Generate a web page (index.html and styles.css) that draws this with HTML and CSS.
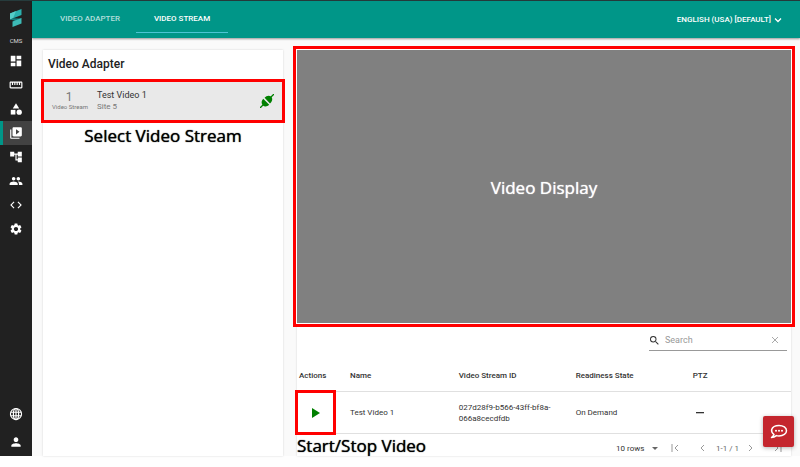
FILE: index.html
```html
<!DOCTYPE html>
<html lang="en">

<head>
    <meta charset="UTF-8">
    <meta name="viewport" content="width=device-width, initial-scale=1.0">
    <title>Video Stream</title>
    <link rel="stylesheet" href="styles.css">
</head>

<body>
    <div class="app">
        <nav class="sidebar" aria-label="Main">
            <a class="logo" href="#" aria-label="Home">
                <svg viewBox="0 0 12 20" width="12" height="20">
                    <path fill="#2bb0ae" d="M0 5.500 11.500 1v6L0 11.500z" />
                    <path fill="#55cdc8" d="M0 5.500 6 3.100 3 10.300 0 11.500z" />
                    <path fill="#14807f" d="M0 11.500 3 10.300l8.500.2L6 13z" />
                    <path fill="#3dbab6" d="M2.500 13.500 11.500 10v5.500L2.500 19z" />
                </svg>
            </a>
            <span class="brand">CMS</span>
            <a class="item" href="#" aria-label="Dashboard"><svg viewBox="0 0 24 24"><path d="M3 13h8V3H3v10zm0 8h8v-6H3v6zm10 0h8V11h-8v10zm0-18v6h8V3h-8z" /></svg></a>
            <a class="item" href="#" aria-label="Measure"><svg viewBox="0 0 24 24"><path d="M21 6H3c-1.100 0-2 .9-2 2v8c0 1.100.9 2 2 2h18c1.100 0 2-.9 2-2V8c0-1.100-.9-2-2-2zm0 10H3V8h2v4h2V8h2v4h2V8h2v4h2V8h2v4h2V8h2v8z" /></svg></a>
            <a class="item" href="#" aria-label="Assets"><svg viewBox="0 0 24 24"><path d="M12 2 6.500 11h11z" /><circle cx="17.500" cy="17.500" r="4.500" /><path d="M3 13.500h8v8H3z" /></svg></a>
            <a class="item active" href="#" aria-label="Video"><svg viewBox="0 0 24 24"><path d="M4 6H2v14c0 1.100.9 2 2 2h14v-2H4V6zm16-4H8c-1.100 0-2 .9-2 2v12c0 1.100.9 2 2 2h12c1.100 0 2-.9 2-2V4c0-1.100-.9-2-2-2zm-8 12.500v-9l6 4.500-6 4.500z" /></svg></a>
            <a class="item" href="#" aria-label="Hierarchy"><svg viewBox="0 0 24 24"><path d="M22 11V3h-7v3H9V3H2v8h7V8h2v10h4v3h7v-8h-7v3h-2V8h2v3z" /></svg></a>
            <a class="item" href="#" aria-label="Users"><svg viewBox="0 0 24 24"><path d="M16 11c1.660 0 3-1.340 3-3s-1.340-3-3-3-3 1.340-3 3 1.340 3 3 3zm-8 0c1.660 0 3-1.340 3-3S9.660 5 8 5 5 6.340 5 8s1.340 3 3 3zm0 2c-2.330 0-7 1.170-7 3.500V19h14v-2.500c0-2.330-4.670-3.500-7-3.500zm8 0c-.3 0-.6 0-1 .05 1.200.85 2 2 2 3.450V19h6v-2.500c0-2.330-4.670-3.500-7-3.500z" /></svg></a>
            <a class="item" href="#" aria-label="Developer"><svg viewBox="0 0 24 24"><path d="M9.400 16.600 4.800 12l4.600-4.600L8 6l-6 6 6 6 1.400-1.400zm5.200 0 4.600-4.600-4.600-4.600L16 6l6 6-6 6-1.400-1.400z" /></svg></a>
            <a class="item" href="#" aria-label="Settings"><svg viewBox="0 0 24 24"><path d="M19.140 12.940c.04-.3.060-.61.060-.94 0-.32-.02-.64-.07-.94l2.030-1.580c.18-.14.230-.41.120-.61l-1.920-3.320c-.12-.22-.37-.29-.59-.22l-2.390.96c-.5-.38-1.030-.7-1.620-.94l-.36-2.540c-.04-.24-.24-.41-.48-.41h-3.840c-.24 0-.43.170-.47.410l-.36 2.540c-.59.240-1.130.570-1.620.940l-2.390-.96c-.22-.08-.47 0-.59.220L2.740 8.870c-.12.210-.08.470.120.610l2.030 1.580c-.05.300-.09.630-.09.940s.02.640.070.940l-2.030 1.580c-.18.140-.23.410-.12.610l1.920 3.320c.12.220.370.290.590.220l2.390-.96c.5.380 1.030.700 1.620.940l.36 2.540c.05.240.240.410.480.410h3.840c.24 0 .44-.17.470-.41l.36-2.540c.59-.24 1.130-.56 1.620-.94l2.390.96c.22.080.470 0 .590-.22l1.920-3.320c.12-.22.070-.47-.12-.61l-2.010-1.580zM12 15.600c-1.980 0-3.600-1.620-3.600-3.600s1.620-3.600 3.600-3.600 3.600 1.620 3.600 3.600-1.620 3.600-3.600 3.600z" /></svg></a>
            <div class="bottom">
                <a class="item" href="#" aria-label="Language"><svg class="line" viewBox="0 0 24 24"><circle cx="12" cy="12" r="9.500" /><ellipse cx="12" cy="12" rx="4.500" ry="9.500" /><path d="M3 9h18M3 15h18M12 2v20" /></svg></a>
                <a class="item" href="#" aria-label="Account"><svg viewBox="0 0 24 24"><path d="M12 12c2.210 0 4-1.790 4-4s-1.790-4-4-4-4 1.790-4 4 1.790 4 4 4zm0 2c-2.670 0-8 1.340-8 4v2h16v-2c0-2.660-5.330-4-8-4z" /></svg></a>
            </div>
        </nav>

        <div class="page">
            <header class="topbar">
                <a class="tab" href="#">VIDEO ADAPTER</a>
                <a class="tab selected" href="#">VIDEO STREAM</a>
                <button class="language" type="button">ENGLISH (USA) [DEFAULT]
                    <svg viewBox="0 0 8 8" width="8" height="8"><path d="M1 2.500 4 5.500 7 2.500" fill="none" stroke="currentColor" stroke-width="1.300" /></svg>
                </button>
            </header>

            <main class="content">
                <section class="adapters">
                    <h1 class="title">Video Adapter</h1>
                    <a class="adapter marked" href="#">
                        <span class="count"><b>1</b>Video Stream</span>
                        <span class="info"><b>Test Video 1</b>Site 5</span>
                        <svg class="plug" viewBox="0 0 14 14" width="14" height="14">
                            <path d="M0 14 4 10M10 4l4-4" stroke="green" stroke-width="1.300" />
                            <path fill="green" d="M3.200 4.800 9.200 10.800C7 12.800 4.500 13 2.800 11.200S1.200 7 3.200 4.800zM4.600 3.800C6.400 1.600 9.300 1 11.200 2.800s1 5-1.200 6.600z" />
                        </svg>
                    </a>
                    <p class="note select-note">Select Video Stream</p>
                </section>

                <section class="stream">
                    <div class="display marked">
                        <p class="note">Video Display</p>
                    </div>
                    <div class="search">
                        <label for="search" aria-label="Search">
                            <svg viewBox="3 3 18 18" width="9" height="9"><path d="M15.500 14h-.79l-.28-.27A6.470 6.470 0 0 0 16 9.500 6.500 6.500 0 1 0 9.500 16c1.610 0 3.090-.59 4.230-1.570l.27.280v.79l5 4.990L20.490 19l-4.990-5zm-6 0C7.010 14 5 11.990 5 9.500S7.010 5 9.500 5 14 7.010 14 9.500 11.990 14 9.500 14z" fill="#333" /></svg>
                        </label>
                        <input id="search" type="text" placeholder="Search">
                        <button type="button" aria-label="Clear"><svg viewBox="0 0 8 8" width="8" height="8"><path d="m1 1 6 6M7 1 1 7" stroke="#aaa" /></svg></button>
                    </div>
                    <table class="streams">
                        <thead>
                            <tr>
                                <th class="actions">Actions</th>
                                <th class="name">Name</th>
                                <th class="stream-id">Video Stream ID</th>
                                <th class="state">Readiness State</th>
                                <th class="ptz">PTZ</th>
                            </tr>
                        </thead>
                        <tbody>
                            <tr>
                                <td class="play-cell marked"><button type="button" aria-label="Play"><svg viewBox="0 0 8 10" width="8" height="10"><path d="M0 0v10l8-5z" fill="green" /></svg></button></td>
                                <td>Test Video 1</td>
                                <td>027d28f9-b566-43ff-bf8a-066a8cecdfdb</td>
                                <td>On Demand</td>
                                <td><svg class="dash" viewBox="0 0 8 2" width="8" height="2"><path d="M0 0h8v1.300H0z" fill="#333" /></svg></td>
                            </tr>
                        </tbody>
                    </table>
                    <footer class="pager">
                        <p class="note">Start/Stop Video</p>
                        <label class="rows">
                            <select aria-label="Rows per page">
                                <option>10 rows</option>
                            </select>
                            <svg viewBox="0 0 8 8"><path d="M1 3h6L4 6z" fill="#666" stroke="none" /></svg>
                        </label>
                        <button type="button" aria-label="First page"><svg viewBox="0 0 8 8"><path d="M1 0v8M7 1 4 4l3 3" /></svg></button>
                        <button type="button" aria-label="Previous page"><svg viewBox="0 0 8 8"><path d="M6 1 3 4l3 3" /></svg></button>
                        <span class="range">1-1 / 1</span>
                        <button type="button" aria-label="Next page"><svg viewBox="0 0 8 8"><path d="m2 1 3 3-3 3" /></svg></button>
                        <button type="button" aria-label="Last page"><svg viewBox="0 0 8 8"><path d="m1 1 3 3-3 3M7 0v8" /></svg></button>
                    </footer>
                </section>
            </main>
        </div>

        <button class="chat" type="button" aria-label="Chat">
            <svg viewBox="0 0 18 16" width="18" height="16">
                <path d="M4 10.500C2 9 1.200 7.500 1.700 5.500 2.500 3 5.500 1.500 9 1.500c4.300 0 7.500 2.200 7.500 5.200S13.300 12 9 12c-1 0-1.800-.1-2.600-.4C5 12.800 3.500 13.500 1.500 13.500 2.800 12.500 3.700 11.500 4 10.500z" fill="none" stroke="#fff" stroke-width="1.500" stroke-linejoin="round" />
                <circle cx="6" cy="6.700" r="1" fill="#fff" /><circle cx="9" cy="6.700" r="1" fill="#fff" /><circle cx="12" cy="6.700" r="1" fill="#fff" />
            </svg>
        </button>
    </div>
</body>

</html>
```
FILE: styles.css
```css
* {
    box-sizing: border-box;
}

body {
    margin: 0;
    padding-bottom: 11px;
    height: 100vh;
    background-color: #fefefe;
    font-family: Roboto, sans-serif;
    font-size: 8px;
    color: #333;
}

a {
    color: inherit;
    text-decoration: none;
}

button {
    display: flex;
    align-items: center;
    justify-content: center;
    padding: 0;
    border: none;
    background: none;
    font: inherit;
    color: inherit;
}

h1,
p {
    margin: 0;
}

.app {
    position: relative;
    display: flex;
    height: 100%;
    border-top: 1px solid #263b3c;
    background-color: #fafafa;
}

/* sidebar */
.sidebar {
    display: flex;
    flex-direction: column;
    width: 32px;
    background-color: #212121;
    color: #fff;
}

.logo {
    display: flex;
    justify-content: center;
    padding-top: 7px;
}

.brand {
    padding: 8px 0;
    line-height: 10px;
    font-size: 6px;
    text-align: center;
    color: #ddd;
    height: 21px;
}

.item {
    display: flex;
    align-items: center;
    justify-content: center;
    height: 24px;
}

.item svg {
    width: 14px;
    height: 14px;
    fill: #fff;
}

.item .line {
    fill: none;
    stroke: #fff;
    stroke-width: 2;
}

.active {
    background-color: #424242;
    border-left: 3px solid #009688;
    padding-right: 3px;
}

.bottom {
    display: flex;
    flex-direction: column;
    gap: 4px;
    margin-top: auto;
    padding-bottom: 2px;
}

/* top bar */
.page {
    flex: 1;
    display: flex;
    flex-direction: column;
    min-width: 0;
}

.topbar {
    display: flex;
    align-items: center;
    height: 37px;
    padding: 0 18px 0 12px;
    background-color: #009688;
    box-shadow: 0 1px 2px rgba(0, 0, 0, 0.4);
    font-weight: 500;
    color: #fff;
}

.tab {
    width: 92px;
    line-height: 26px;
    border-bottom: 1px solid transparent;
    text-align: center;
    color: #b2dfdb;
}

.selected {
    border-color: #4dc4d4;
    color: #fff;
}

.language {
    gap: 3px;
    margin-left: auto;
}

/* content */
.content {
    flex: 1;
    display: grid;
    grid-template-columns: 240fr 494fr;
    gap: 14px;
    padding: 12px 9px 0 11px;
    min-height: 0;
}

.adapters,
.stream {
    background-color: #fff;
    box-shadow: 0 0 2px rgba(0, 0, 0, 0.15);
    min-width: 0;
}

.title {
    padding: 0 5px;
    line-height: 28px;
    font-size: 12px;
    font-weight: 500;
    color: #222;
}

/* red frame round a highlighted part */
.marked {
    position: relative;
}

.marked::after {
    content: "";
    position: absolute;
    inset: -2px;
    border: 3px solid #f00;
    pointer-events: none;
}

.adapter {
    display: flex;
    align-items: center;
    height: 40px;
    margin-top: 3px;
    padding: 0 9px;
    background-color: #e9e9e9;
}

.count,
.info {
    display: flex;
    flex-direction: column;
    color: #777;
}

.count {
    width: 34px;
    font-size: 6px;
    line-height: 8px;
    text-align: center;
    white-space: nowrap;
}

.count b {
    font-size: 12px;
    font-weight: 400;
    line-height: 12px;
}

.info {
    flex: 1;
    margin-left: 11px;
    line-height: 12px;
}

.info b {
    font-size: 9px;
    font-weight: 400;
    color: #333;
}

.note {
    font-family: "Open Sans", sans-serif;
    font-size: 17px;
    line-height: 24px;
    color: #000;
    text-shadow: 0 0 1px currentColor;
    white-space: nowrap;
}

.select-note {
    padding-top: 3px;
    text-align: center;
}

.stream {
    display: flex;
    flex-direction: column;
}

.display {
    flex: 1;
    display: flex;
    align-items: center;
    justify-content: center;
    padding-top: 4px;
    background-color: #808080;
    box-shadow: 0 0 0 2px #fff;
}

.display::after {
    inset: -4px;
}

.display .note {
    color: #fff;
}

.search {
    display: flex;
    align-items: center;
    gap: 6px;
    width: 138px;
    height: 20px;
    margin: 8px 4px 0 auto;
    padding: 0 8px 0 1px;
    border-bottom: 1px solid #999;
}

.search label {
    display: flex;
}

.search input {
    flex: 1;
    min-width: 0;
    padding: 0;
    border: none;
    outline: none;
    background: none;
    font: 9px Roboto, sans-serif;
}

.search input::placeholder {
    color: #999;
}

/* table */
.streams {
    width: 100%;
    table-layout: fixed;
    border-collapse: collapse;
    line-height: 11px;
    text-align: left;
}

.streams th {
    height: 41px;
    padding: 10px 2px 0;
    font-weight: 500;
}

.streams td {
    height: 42px;
    padding: 0 2px;
    border-top: 1px solid #e0e0e0;
    border-bottom: 1px solid #e0e0e0;
}

.actions {
    width: 51px;
}

.name {
    width: 22%;
}

.stream-id,
.state {
    width: 117px;
}

.play-cell button {
    width: 33px;
}

.play-cell::after {
    right: 12px;
}

.dash {
    display: block;
    margin-left: 3px;
}

.pager {
    display: flex;
    align-items: center;
    height: 22px;
    padding-right: 9px;
    color: #666;
}

.pager .note {
    padding-top: 2px;
}

.pager svg {
    display: block;
    width: 8px;
    height: 8px;
    fill: none;
    stroke: #999;
}

.rows {
    display: flex;
    align-items: center;
    gap: 6px;
    margin: 6px 12px 0 auto;
}

.rows select {
    padding: 0;
    border: none;
    appearance: none;
    background: none;
    font: inherit;
    color: #333;
}

.pager button,
.range {
    margin-top: 6px;
}

.pager button + button {
    margin-left: 19px;
}

.range {
    margin-left: 10px;
    margin-right: 8px;
}

.chat {
    position: absolute;
    right: 6px;
    bottom: 9px;
    width: 31px;
    height: 31px;
    border-radius: 2px;
    background-color: #c4262e;
    box-shadow: 0 1px 4px rgba(0, 0, 0, 0.3);
}
```
